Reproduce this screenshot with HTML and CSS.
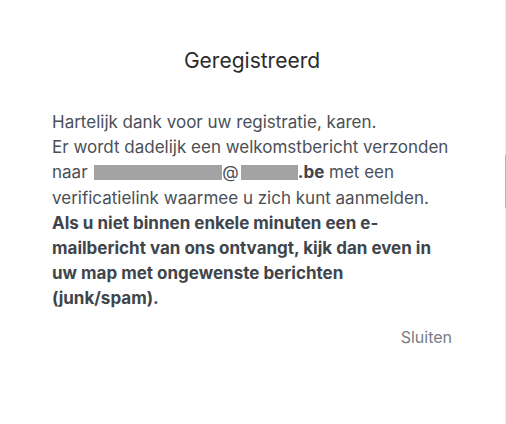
FILE: index.html
```html
<!DOCTYPE html>
<html lang="nl">
<head>
<meta charset="utf-8">
<title>Geregistreerd</title>
<link rel="stylesheet" href="styles.css">
</head>
<body>
<div class="page">
  <div class="modal">
    <h1 class="modal-title">Geregistreerd</h1>
    <div class="modal-body">
      <p>Hartelijk dank voor uw registratie, karen.<br>Er wordt dadelijk een welkomstbericht verzonden naar <span class="redact redact-user"></span>@<span class="redact redact-domain"></span><b>.be</b> met een verificatielink waarmee u zich kunt aanmelden.<br><b>Als u niet binnen enkele minuten een e-mailbericht van ons ontvangt, kijk dan even in uw map met ongewenste berichten (junk/spam).</b></p>
    </div>
    <div class="modal-footer">
      <button class="btn-close" type="button">Sluiten</button>
    </div>
  </div>
  <div class="scroll-track"><div class="scroll-thumb"></div></div>
</div>
</body>
</html>
```

FILE: styles.css
```css
html, body {
  margin: 0;
  padding: 0;
  background: #ffffff;
}

.page {
  position: relative;
  width: 506px;
  height: 424px;
  box-sizing: border-box;
  border-right: 1px solid #ececec;
  font-family: Inter, "Noto Sans", "Liberation Sans", sans-serif;
}

.modal {
  width: 400px;
  padding: 47px 0 0 52px;
}

.modal-title {
  margin: 0;
  text-align: center;
  font-size: 21px;
  font-weight: 400;
  line-height: 28px;
  color: #2b2b2b;
}

.modal-body {
  margin-top: 35px;
}

.modal-body p {
  margin: 0;
  font-size: 17px;
  line-height: 25.2px;
  color: #4a4f57;
}

.modal-body b {
  font-weight: 700;
  color: #40454c;
}

.redact {
  display: inline-block;
  height: 15px;
  background: #a3a3a3;
  vertical-align: -2px;
}

.redact-user {
  width: 128px;
  margin-left: 2px;
}

.redact-domain {
  width: 57px;
  margin-left: 2px;
}

.modal-footer {
  display: flex;
  justify-content: flex-end;
  margin-top: 14px;
}

.btn-close {
  border: none;
  background: none;
  padding: 0;
  font-family: inherit;
  font-size: 16px;
  line-height: 22px;
  color: #777d85;
  cursor: pointer;
}

.scroll-track {
  position: absolute;
  top: 0;
  right: -1px;
  width: 1px;
  height: 100%;
}

.scroll-thumb {
  position: absolute;
  top: 155px;
  left: 0;
  width: 1px;
  height: 53px;
  background: #b5b5b5;
}
```
